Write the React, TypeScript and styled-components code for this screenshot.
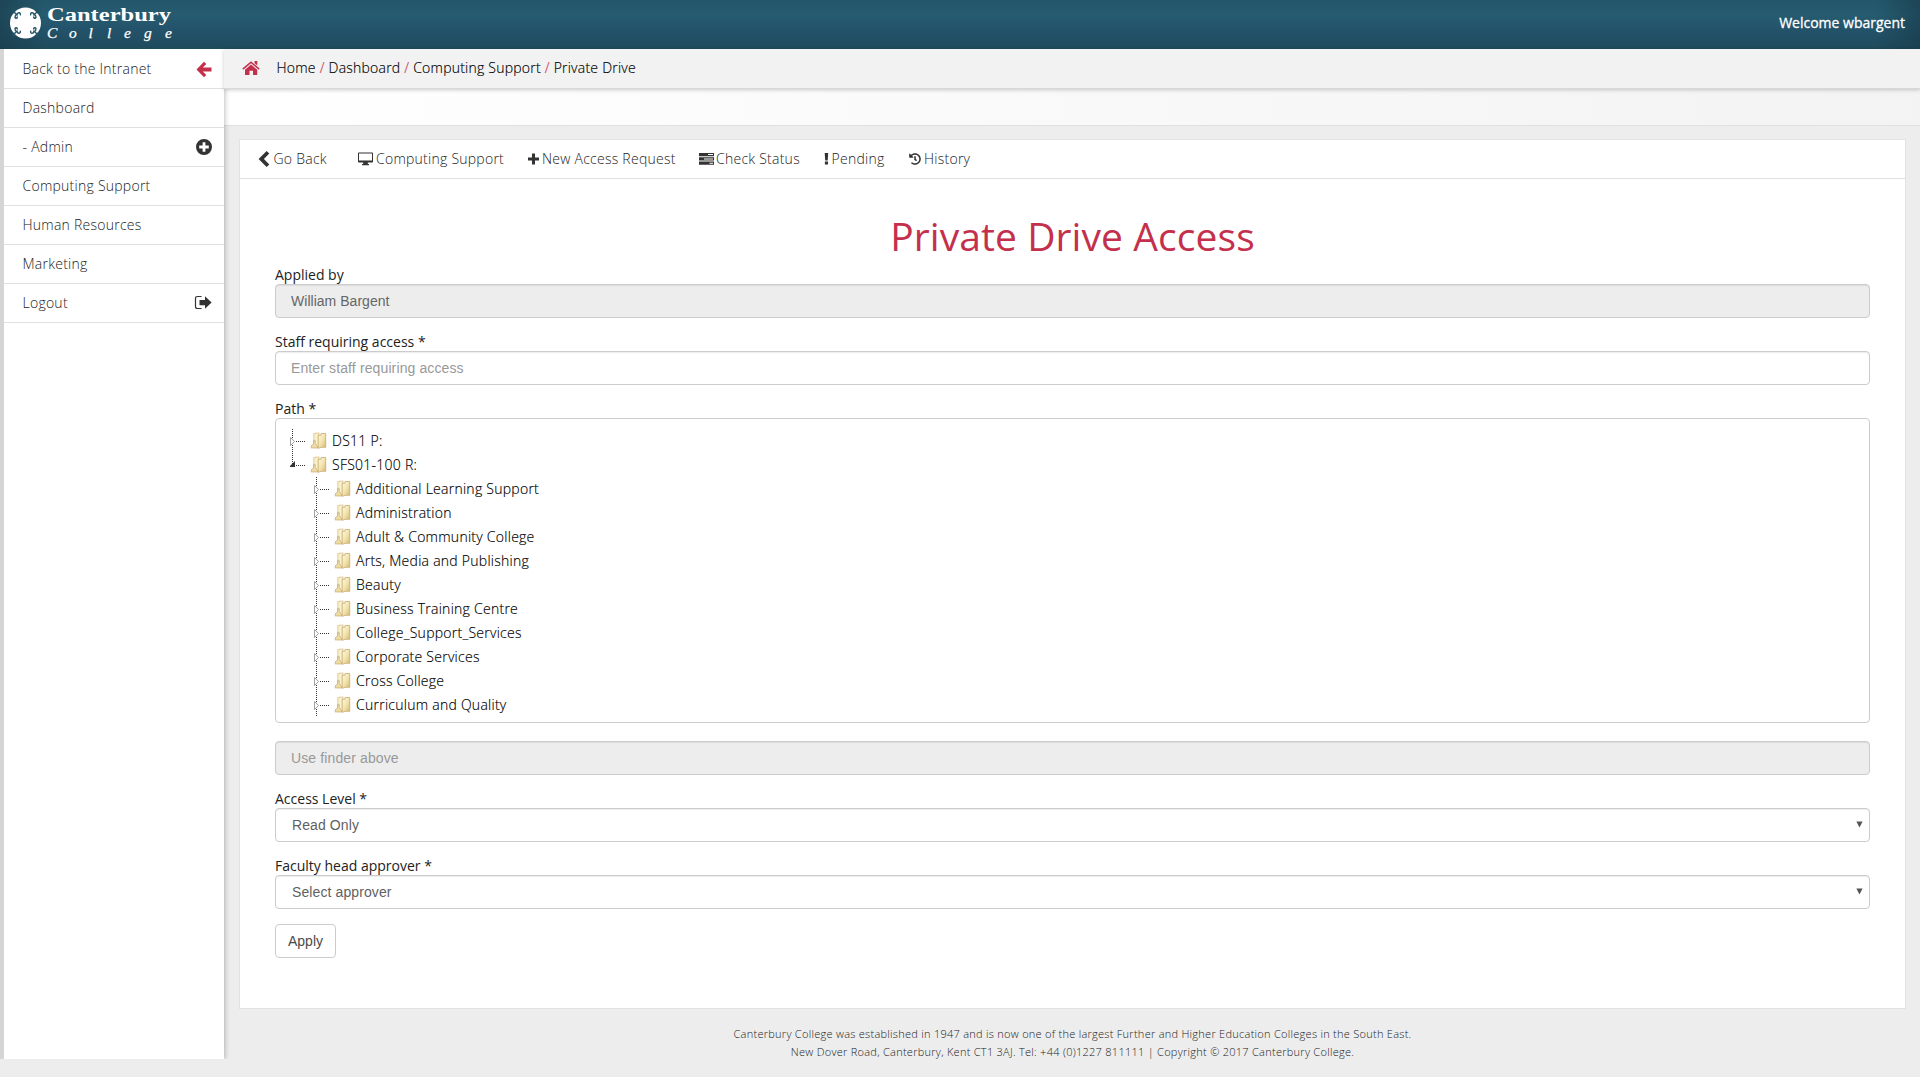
import React from "react";
import styled, { createGlobalStyle } from "styled-components";
import { FaHistory } from "react-icons/fa";

const GlobalStyle = createGlobalStyle`
  *, *::before, *::after { box-sizing: border-box; }
  html, body { margin: 0; padding: 0; }
  body {
    background: #ededed;
    color: #333;
    font-family: "Open Sans", "Noto Sans", sans-serif;
    font-size: 14px;
    font-weight: 300;
    letter-spacing: 0.25px;
    line-height: 20px;
  }
`;

const Page = styled.div`
  height: 1077px;
  overflow: hidden;
  display: flex;
  flex-direction: column;
  background: #ededed;
`;

const Header = styled.header`
  height: 49px;
  flex: none;
  display: flex;
  justify-content: space-between;
  padding: 0 15px 0 10px;
  background: linear-gradient(to right, rgba(24, 58, 72, 0.6), rgba(24, 58, 72, 0) 44px, rgba(24, 58, 72, 0) calc(100% - 44px), rgba(24, 58, 72, 0.6)),
    linear-gradient(#24566a, #265b70 30%, #23536a 60%, #1f4a5c);
`;

const Welcome = styled.div`
  color: #fff;
  font-weight: 400;
  letter-spacing: 0;
  line-height: 46px;
  -webkit-text-stroke: 0.3px #fff;
`;

const Body = styled.div`
  flex: 1;
  min-height: 0;
  display: flex;
`;

const Sidebar = styled.nav`
  width: 224px;
  height: 1010px;
  flex: none;
  border-left: 4px solid #d5d5d5;
  background: #fff;
  box-shadow: 1px 0 5px rgba(0, 0, 0, 0.25);
  clip-path: inset(0 -8px 0 0);
`;

const SideItem = styled.a<{ $first?: boolean }>`
  display: flex;
  align-items: center;
  justify-content: space-between;
  height: ${(p) => (p.$first ? 40 : 39)}px;
  padding: ${(p) => (p.$first ? 1 : 0)}px 12px 0 18.5px;
  border-bottom: 1px solid #e0e0e0;
  color: #222;
`;

const Main = styled.main`
  flex: 1;
  min-width: 0;
  display: flex;
  flex-direction: column;
`;

const Breadcrumb = styled.div`
  position: relative;
  height: 40px;
  flex: none;
  display: flex;
  align-items: center;
  padding: 0 0 1px 18px;
  background: #f2f2f2;
  border-bottom: 1px solid #d8d8d8;
  box-shadow: 0 1px 4px rgba(0, 0, 0, 0.2);
  color: #000;
`;

const CrumbTrail = styled.div`
  margin-left: 16.5px;
  letter-spacing: 0.23px;
  -webkit-text-stroke: 0.15px;
  white-space: pre;
`;

const Slash = styled.span`
  color: #cc2f50;
`;

const SubBar = styled.div`
  height: 37px;
  flex: none;
  background: linear-gradient(to right, #fff, #f3f3f3);
  border-bottom: 1px solid #e0e0e0;
`;

const Card = styled.section`
  margin: 13px 14px 0 15px;
  height: 870px;
  flex: none;
  background: #fff;
  border: 1px solid #e2e2e2;
`;

const Toolbar = styled.div`
  display: flex;
  align-items: center;
  height: 39px;
  padding: 0 0 0 18px;
  border-bottom: 1px solid #e0e0e0;
`;

const Tool = styled.a<{ $width: number }>`
  display: flex;
  align-items: center;
  width: ${(p) => p.$width}px;
  color: #222;
  white-space: nowrap;
`;

const ToolIcon = styled.span<{ $slot: number }>`
  display: flex;
  align-items: center;
  flex: none;
  width: ${(p) => p.$slot}px;
  color: #333;
`;

const Form = styled.form`
  padding: 32px 35px 0;
`;

const Title = styled.h1`
  margin: 0 0 5px;
  color: #c4304c;
  font-size: 39px;
  font-weight: 400;
  letter-spacing: 0.08px;
  line-height: 50px;
  text-align: center;
`;

const Field = styled.div`
  margin-bottom: 15px;
`;

const Label = styled.label`
  display: block;
  height: 18px;
  color: #222;
  font-weight: 400;
  letter-spacing: 0;
  line-height: 17px;
`;

const Input = styled.input`
  display: block;
  width: 100%;
  height: 34px;
  padding: 1px 15px 2px;
  border: 1px solid #ccc;
  border-radius: 4px;
  outline: none;
  background: #fff;
  box-shadow: inset 0 1px 1px rgba(0, 0, 0, 0.075);
  color: #666;
  font: 14px "Liberation Sans", Arial, sans-serif;
  letter-spacing: 0.03px;
  &::placeholder { color: #999; opacity: 1; letter-spacing: 0.12px; }
  &:read-only { background: #ededed; }
`;

const Select = styled.div`
  display: flex;
  align-items: center;
  justify-content: space-between;
  height: 34px;
  padding: 0 6px 1px 16px;
  border: 1px solid #ccc;
  border-radius: 4px;
  background: #fff;
  box-shadow: inset 0 1px 1px rgba(0, 0, 0, 0.075);
  color: #5f5f5f;
  font: 14px "Liberation Sans", Arial, sans-serif;
  letter-spacing: 0.1px;
`;

const Finder = styled.div`
  height: 305px;
  margin-bottom: 18px;
  padding: 10px 14px 0;
  border: 1px solid #ccc;
  border-radius: 4px;
  color: #000;
`;

const Tree = styled.ul<{ $nested?: boolean }>`
  margin: 0;
  padding: 0 0 0 ${(p) => (p.$nested ? 24 : 0)}px;
  list-style: none;
`;

const TreeRow = styled.li`
  display: flex;
  align-items: center;
  height: 24px;
`;

const TreeText = styled.span`
  margin-left: 5px;
  letter-spacing: 0.26px;
  -webkit-text-stroke: 0.15px;
`;

const Button = styled.button`
  display: block;
  width: 61px;
  height: 34px;
  padding: 0 0 1px;
  border: 1px solid #ccc;
  border-radius: 4px;
  background: #fff;
  color: #4a4a4a;
  font: 14px "Liberation Sans", Arial, sans-serif;
  letter-spacing: 0;
`;

const Footer = styled.footer`
  padding-top: 16px;
  margin: 0 14px 0 15px;
  color: #222;
  font-size: 11px;
  letter-spacing: 0.27px;
  line-height: 18px;
  text-align: center;
`;

/* College cross: a disc with curled notches on each diagonal, beside the wordmark. */
const Logo = () => (
  <svg width="166" height="49" viewBox="10 0 166 49">
    <circle cx="25.500" cy="23" r="15.500" fill="#fff" />
    {[[1, 1], [-1, 1], [1, -1], [-1, -1]].map(([sx, sy]) => (
      <g key={`${sx}${sy}`} transform={`translate(25.500 23) scale(${sx} ${sy})`} fill="none" stroke="#24566a" strokeLinecap="round">
        <path d="M13 9L11.500 10.500L9.500 12.800L12 13.500Z" fill="#24566a" strokeWidth="0.600" />
        <path d="M11.300 10.800L8.300 8M5.200 8.300C4.600 10.600 7.600 11 8.300 9C9 8.600 10.800 7.800 10.500 5.600C9.800 4 8 4.800 8.200 6" strokeWidth="1.400" />
      </g>
    ))}
    <text x="47" y="20.500" fill="#fff" fontFamily="Liberation Serif, serif" fontWeight="700" fontSize="18.500" letterSpacing="0" textLength="124" lengthAdjust="spacingAndGlyphs">
      Canterbury
    </text>
    {[["C", 47], ["o", 69], ["l", 88.500], ["l", 107], ["e", 124], ["g", 144], ["e", 165]].map(([c, x], i) => (
      <text key={i} x={x} y="38" fill="#fff" stroke="#fff" strokeWidth="0.250" fontFamily="Liberation Serif, serif" fontStyle="italic" fontWeight="400" fontSize="15.500">
        {c}
      </text>
    ))}
  </svg>
);

const BackArrow = () => (
  <svg width="16" height="17" viewBox="0 0 16 17">
    <path fill="#c4304c" d="M0.500 8.500L8 0.800L10.300 3L6.800 6.600H15.500V10.400H6.800L10.300 14L8 16.200Z" />
  </svg>
);

const PlusCircle = () => (
  <svg width="16" height="16" viewBox="0 0 16 16">
    <path fill="#333" fillRule="evenodd" d="M8 0a8 8 0 1 0 0 16a8 8 0 1 0 0-16M6.600 3.200H9.400V6.600H12.800V9.400H9.400V12.800H6.600V9.400H3.200V6.600H6.600Z" />
  </svg>
);

const LogoutIcon = () => (
  <svg width="18" height="16" viewBox="0 0 18 16">
    <path d="M7.500 1.500H3.500Q1.500 1.500 1.500 3.500V11.500Q1.500 13.500 3.500 13.500H7.500" fill="none" stroke="#333" strokeWidth="1.200" />
    <path d="M5.500 5H11V1.200L17.600 7.500L11 13.800V10.200H5.500Z" fill="#333" />
  </svg>
);

const HomeIcon = () => (
  <svg width="18" height="16" viewBox="0 0 18 16">
    <path fill="#c4304c" d="M9 1.200L17.700 8.600L16.700 9.700L9 3.300L1.300 9.700L0.300 8.600ZM12.500 1H15.300V5.600L12.500 3.200ZM9 4.500L15.200 9.700V15H11V10.800H7.500V15H3V9.700Z" />
  </svg>
);

const Chevron = () => (
  <svg width="12" height="16" viewBox="0 0 12 16">
    <path fill="#333" d="M8.600 0L11.300 2.600L5.900 8L11.300 13.400L8.600 16L0.600 8Z" />
  </svg>
);

const Monitor = () => (
  <svg width="15" height="14" viewBox="0 0 15 14">
    <path fill="#333" fillRule="evenodd" d="M0.800 0.500H14.200Q15 0.500 15 1.300V9.700Q15 10.500 14.200 10.500H9.800V12H11V13.200H4V12H5.200V10.500H0.800Q0 10.500 0 9.700V1.300Q0 0.500 0.800 0.500M1 1.500V8.500H14V1.500Z" />
  </svg>
);

const Plus = () => (
  <svg width="11" height="12" viewBox="0 0 11 12">
    <path fill="#333" d="M4 0.500H7V4.500H11V7.500H7V11.500H4V7.500H0V4.500H4Z" />
  </svg>
);

const Tasks = () => (
  <svg width="15" height="12" viewBox="0 0 15 12">
    <path fill="#333" fillRule="evenodd" d="M0 0H15V3.200H0ZM9 1H14V2.100H9ZM0 4.300H15V7.500H0ZM5 5.400H14V6.400H5ZM0 8.600H15V11.800H0ZM10.500 9.700H14V10.800H10.500Z" />
  </svg>
);

const Bang = () => (
  <svg width="5" height="12" viewBox="0 0 5 12">
    <path fill="#333" d="M0.700 0H4.200L3.700 7.500H1.200ZM0.900 8.600H4V11.600H0.900Z" />
  </svg>
);

const Caret = () => (
  <svg width="7" height="7" viewBox="0 0 7 7">
    <path fill="#555" d="M0.400 0.500H6.600L3.500 6.500Z" />
  </svg>
);

/* Connector lines plus the expander triangle drawn left of every folder. */
const Joint = ({ open }: { open?: boolean }) => (
  <svg width="20" height="24" viewBox="0 0 20 24" shapeRendering="crispEdges">
    <path d={open ? "M2.500 0V12" : "M2.500 0V24"} stroke="#333" strokeDasharray="1 1" fill="none" />
    <path d="M6 12.500H16" stroke="#333" strokeDasharray="1 1" fill="none" />
    {open ? (
      <path d="M5 8V14H-1Z" fill="#333" shapeRendering="auto" />
    ) : (
      <path d="M0.500 8.500L4.500 12.500L0.500 16.500Z" fill="#fff" stroke="#999" strokeWidth="0.900" shapeRendering="auto" />
    )}
  </svg>
);

const Folder = () => (
  <svg width="17" height="18" viewBox="0 0 17 18">
    <defs>
      <linearGradient id="front" x1="0" y1="0" x2="1" y2="1">
        <stop offset="0" stopColor="#fffbe6" />
        <stop offset="0.500" stopColor="#f3e3ae" />
        <stop offset="1" stopColor="#d3b873" />
      </linearGradient>
    </defs>
    <path d="M3.800 1.500L9 0.900V15L3.800 14Z" fill="#f8efcb" stroke="#d3bd85" strokeWidth="0.700" />
    <path d="M1.200 16V13.800L3.500 11.500V8.500L5.200 8.500V11.500L7.800 15V16Z" fill="#ecdba8" stroke="#bfa368" strokeWidth="0.600" />
    <path d="M8.200 3.200L11 3.200V1.500H15.700V15.300H11L8.200 16.400Z" fill="url(#front)" stroke="#c0a462" strokeWidth="0.700" />
  </svg>
);

const menu: { label: string; icon?: React.ReactNode }[] = [
  { label: "Back to the Intranet", icon: <BackArrow /> },
  { label: "Dashboard" },
  { label: "- Admin", icon: <PlusCircle /> },
  { label: "Computing Support" },
  { label: "Human Resources" },
  { label: "Marketing" },
  { label: "Logout", icon: <LogoutIcon /> },
];

const tools = [
  { label: "Go Back", icon: <Chevron />, slot: 15.5, width: 99.5 },
  { label: "Computing Support", icon: <Monitor />, slot: 18.5, width: 170 },
  { label: "New Access Request", icon: <Plus />, slot: 14.5, width: 171 },
  { label: "Check Status", icon: <Tasks />, slot: 17.5, width: 125 },
  { label: "Pending", icon: <Bang />, slot: 8, width: 85 },
  { label: "History", icon: <FaHistory size={12} />, slot: 15.5, width: 80 },
];

const crumbs = ["Home", "Dashboard", "Computing Support", "Private Drive"];

const folders = [
  "Additional Learning Support",
  "Administration",
  "Adult & Community College",
  "Arts, Media and Publishing",
  "Beauty",
  "Business Training Centre",
  "College_Support_Services",
  "Corporate Services",
  "Cross College",
  "Curriculum and Quality",
];

const TreeNode = ({ label, open }: { label: string; open?: boolean }) => (
  <TreeRow>
    <Joint open={open} />
    <Folder />
    <TreeText>{label}</TreeText>
  </TreeRow>
);

export default function App() {
  return (
    <Page>
      <GlobalStyle />
      <Header>
        <Logo />
        <Welcome>Welcome wbargent</Welcome>
      </Header>
      <Body>
        <Sidebar>
          {menu.map((m, i) => (
            <SideItem key={m.label} $first={i === 0}>
              {m.label}
              {m.icon}
            </SideItem>
          ))}
        </Sidebar>
        <Main>
          <Breadcrumb>
            <HomeIcon />
            <CrumbTrail>
              {crumbs.map((c, i) => (
                <React.Fragment key={c}>
                  {i > 0 && <Slash> / </Slash>}
                  {c}
                </React.Fragment>
              ))}
            </CrumbTrail>
          </Breadcrumb>
          <SubBar />
          <Card>
            <Toolbar>
              {tools.map((t) => (
                <Tool key={t.label} $width={t.width}>
                  <ToolIcon $slot={t.slot}>{t.icon}</ToolIcon>
                  {t.label}
                </Tool>
              ))}
            </Toolbar>
            <Form>
              <Title>Private Drive Access</Title>
              <Field>
                <Label>Applied by</Label>
                <Input readOnly value="William Bargent" />
              </Field>
              <Field>
                <Label>Staff requiring access *</Label>
                <Input placeholder="Enter staff requiring access" />
              </Field>
              <Label>Path *</Label>
              <Finder>
                <Tree>
                  <TreeNode label="DS11 P:" />
                  <TreeNode label="SFS01-100 R:" open />
                </Tree>
                <Tree $nested>
                  {folders.map((f) => (
                    <TreeNode key={f} label={f} />
                  ))}
                </Tree>
              </Finder>
              <Field>
                <Input readOnly placeholder="Use finder above" />
              </Field>
              <Field>
                <Label>Access Level *</Label>
                <Select>
                  Read Only
                  <Caret />
                </Select>
              </Field>
              <Field>
                <Label>Faculty head approver *</Label>
                <Select>
                  Select approver
                  <Caret />
                </Select>
              </Field>
              <Button type="button">Apply</Button>
            </Form>
          </Card>
          <Footer>
            Canterbury College was established in 1947 and is now one of the largest Further and Higher Education Colleges in the South East.
            <br />
            New Dover Road, Canterbury, Kent CT1 3AJ. Tel: +44 (0)1227 811111 | Copyright © 2017 Canterbury College.
          </Footer>
        </Main>
      </Body>
    </Page>
  );
}
